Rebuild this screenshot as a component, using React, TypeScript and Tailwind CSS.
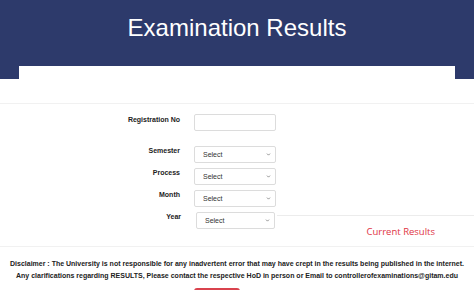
import { ChevronDown } from "lucide-react";

const selects = ["Semester", "Process", "Month"];

function SelectBox({ className = "" }: { className?: string }) {
  return (
    <div className={`relative h-[17px] w-[82px] ${className}`}>
      <select className="block h-full w-full appearance-none rounded-[2px] border border-[#dcdcdc] bg-white pl-[8px] text-[7px] leading-none text-[#333] outline-none">
        <option>Select</option>
      </select>
      <ChevronDown
        className="pointer-events-none absolute right-[5px] top-[6px] h-[5px] w-[5px] text-[#555]"
        strokeWidth={3}
      />
    </div>
  );
}

export default function App() {
  return (
    <div className="h-[290px] w-[474px] overflow-hidden bg-white font-['Liberation_Sans',Arial,sans-serif]">
      {/* header */}
      <div className="flex h-[79px] flex-col items-center bg-[#2d3a6b]">
        <h1 className="pt-[14px] text-[24px] leading-[28px] text-white">Examination Results</h1>
        <div className="mt-auto h-[13px] w-[436px] bg-white" />
      </div>
      <div className="h-[25px] border-b border-[#f1f1f1]" />

      {/* form */}
      <div className="pt-[10px]">
        <div className="flex items-start">
          <div className="w-[180px] pt-[1px] text-right text-[7px] font-bold leading-[10px] text-[#222]">
            Registration No
          </div>
          <input className="ml-[14px] block h-[17px] w-[82px] rounded-[2px] border border-[#dcdcdc] outline-none" />
        </div>

        <div className="mt-[15px] flex flex-col gap-[5px]">
          {selects.map((s) => (
            <div key={s} className="flex items-start">
              <div className="w-[180px] text-right text-[7px] font-bold leading-[10px] text-[#222]">{s}</div>
              <SelectBox className="ml-[14px]" />
            </div>
          ))}
          <div className="flex items-start">
            <div className="w-[181px] text-right text-[7px] font-bold leading-[10px] text-[#222]">Year</div>
            <SelectBox className="ml-[15px] !w-[79px]" />
            <div className="flex flex-1 flex-col pl-[2px]">
              <div className="h-[4px] border-b border-[#ececec]" />
              <div className="pr-[39px] pt-[10px] text-right font-['Open_Sans',sans-serif] text-[9.5px] leading-[12px] text-[#e03444]">
                Current Results
              </div>
            </div>
          </div>
        </div>
      </div>
      <div className="mt-[8px] border-b border-[#f1f1f1]" />

      {/* disclaimer */}
      <div className="flex flex-col items-center pt-[11px] text-[7px] font-bold leading-[12px] text-[#222]">
        <p>
          Disclaimer : The University is not responsible for any inadvertent error that may have crept in the results
          being published in the internet.
        </p>
        <p>
          Any clarifications regarding RESULTS, Please contact the respective HoD in person or Email to
          controllerofexaminations@gitam.edu
        </p>
        <div className="ml-[194px] mt-[6px] h-[12px] w-[46px] self-start rounded-t-[3px] bg-[#d9434e]" />
      </div>
    </div>
  );
}
